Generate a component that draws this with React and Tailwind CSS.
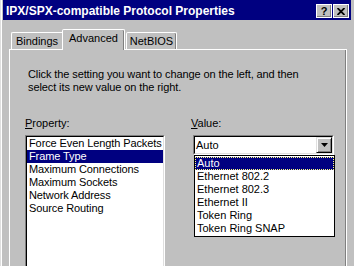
export default function App() {
  const props = [
    "Force Even Length Packets",
    "Frame Type",
    "Maximum Connections",
    "Maximum Sockets",
    "Network Address",
    "Source Routing",
  ];
  const values = [
    "Auto",
    "Ethernet 802.2",
    "Ethernet 802.3",
    "Ethernet II",
    "Token Ring",
    "Token Ring SNAP",
  ];
  return (
    <div className="w-[354px] h-[266px] overflow-hidden bg-[#c0c0c0] flex font-['Liberation_Sans',Arial,sans-serif] text-[11px] leading-[13px] text-black select-none">
      <div className="w-[1px] bg-[#dfdfdf]" />
      <div className="w-[1px] bg-white" />
      <div className="w-[1px]" />
      <div className="flex-1 flex flex-col min-w-0">
        {/* Title bar */}
        <div className="h-[20px] mr-[3px] bg-[#000080] flex items-start justify-between pl-[3px] pr-[2px] overflow-hidden">
          <span className="text-white font-bold text-[12px] leading-[22px] whitespace-nowrap">
            IPX/SPX-compatible Protocol Properties
          </span>
          <div className="flex gap-[1px] mt-[4px]">
            <div className="w-[16px] h-[14px] bg-[#c0c0c0] border-t border-l border-white border-r border-b border-black shadow-[inset_-1px_-1px_0_#808080] flex items-center justify-center">
              <span className="font-bold text-[11px] leading-[11px] text-black">?</span>
            </div>
            <div className="w-[16px] h-[14px] bg-[#c0c0c0] border-t border-l border-white border-r border-b border-black shadow-[inset_-1px_-1px_0_#808080] flex items-center justify-center">
              <svg width="8" height="7" viewBox="0 0 8 7">
                <path d="M0.5 0 L7.5 7 M7.5 0 L0.5 7" stroke="black" strokeWidth="1.8" />
              </svg>
            </div>
          </div>
        </div>

        {/* Tabs */}
        <div className="mt-[9px] ml-[8px] h-[20px] flex items-end">
          <div className="w-[51px] h-[17px] bg-[#c0c0c0] border-t border-l border-white rounded-tl-[2px] flex justify-center pt-[2px]">
            <span className="whitespace-nowrap">Bindings</span>
          </div>
          <div className="relative z-10 self-start w-[63px] h-[21px] bg-[#c0c0c0] border-t border-l border-white border-r border-black rounded-t-[2px] shadow-[inset_-1px_0_0_#808080] flex justify-center pt-[2px]">
            <span className="whitespace-nowrap">Advanced</span>
          </div>
          <div className="ml-[1px] w-[51px] h-[17px] bg-[#c0c0c0] border-t border-l border-white border-r border-black rounded-t-[2px] shadow-[inset_-1px_0_0_#808080] flex justify-center pt-[2px]">
            <span className="whitespace-nowrap">NetBIOS</span>
          </div>
        </div>

        {/* Panel */}
        <div className="flex-1 ml-[6px] mr-[7px] bg-[#c0c0c0] border-t border-l border-white border-r border-black shadow-[inset_-1px_0_0_#808080] pl-[15px] pt-[18px] overflow-hidden">
          <div className="ml-[3px] whitespace-nowrap tracking-[-0.1px]">
            <div>Click the setting you want to change on the left, and then</div>
            <div>select its new value on the right.</div>
          </div>

          <div className="mt-[23px] flex gap-[26px]">
            {/* Property column */}
            <div className="w-[140px] flex flex-col">
              <div>
                <span className="underline underline-offset-[1px]">P</span>roperty:
              </div>
              <div className="mt-[5px] h-[160px] border-t border-l border-[#808080] border-r border-b border-r-white border-b-white">
                <div className="h-full bg-white border-t border-l border-black border-r border-b border-r-[#dfdfdf] border-b-[#dfdfdf] tracking-[-0.1px]">
                  {props.map((p, i) => (
                    <div
                      key={p}
                      className={
                        i === 1
                          ? "h-[13px] pl-[2px] bg-[#000080] text-white whitespace-nowrap"
                          : "h-[13px] pl-[2px] whitespace-nowrap"
                      }
                    >
                      {p}
                    </div>
                  ))}
                </div>
              </div>
            </div>

            {/* Value column */}
            <div className="flex flex-col">
              <div>
                <span className="underline underline-offset-[1px]">V</span>alue:
              </div>
              <div className="relative mt-[5px] ml-[2px] w-[141px] h-[20px] border-t border-l border-[#808080] border-r border-b border-r-white border-b-white">
                <div className="h-full bg-white border-t border-l border-black border-r border-b border-r-[#dfdfdf] border-b-[#dfdfdf] flex items-center justify-between">
                  <span className="pl-[1px]">Auto</span>
                  <div className="w-[16px] h-[16px] bg-[#c0c0c0] border-t border-l border-[#dfdfdf] border-r border-b border-r-black border-b-black shadow-[inset_1px_1px_0_white,inset_-1px_-1px_0_#808080] flex items-center justify-center">
                    <svg width="7" height="4" viewBox="0 0 7 4">
                      <path d="M0 0 H7 L3.5 4 Z" fill="black" />
                    </svg>
                  </div>
                </div>
                <div className="absolute z-10 left-0 top-[19px] w-[141px] bg-white border border-black pt-[1px] pb-[1px]">
                  {values.map((v, i) => (
                    <div
                      key={v}
                      className={
                        i === 0
                          ? "h-[13px] pl-[1px] bg-[#000080] text-white border border-dotted border-[#ffff80] leading-[11px] whitespace-nowrap"
                          : "h-[13px] pl-[2px] whitespace-nowrap"
                      }
                    >
                      {v}
                    </div>
                  ))}
                </div>
              </div>
            </div>
          </div>
        </div>
      </div>
    </div>
  );
}
